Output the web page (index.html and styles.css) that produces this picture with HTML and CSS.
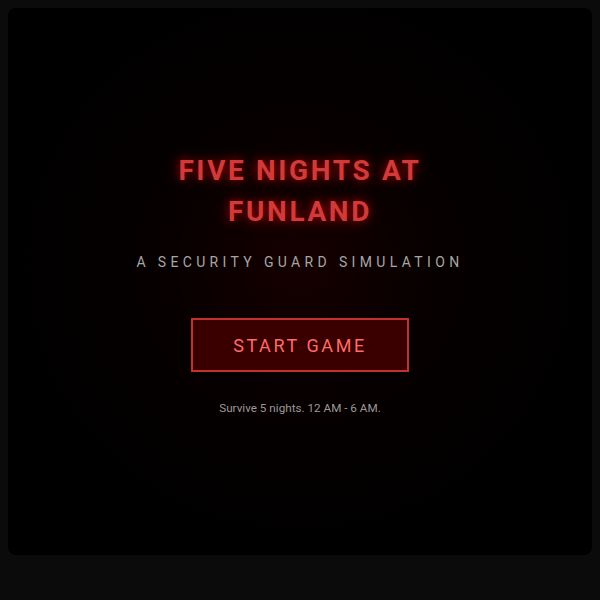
FILE: index.html
```html
<!DOCTYPE html>
<html lang="en">
<head>
    <meta charset="UTF-8">
    <meta name="viewport" content="width=device-width, initial-scale=1.0">
    <title>Five Nights at Funland</title>
    <link rel="stylesheet" href="styles.css">
</head>
<body>
    <div class="screen">
        <div class="menu">
            <h1 class="title">FIVE NIGHTS AT<br>FUNLAND</h1>
            <div class="subtitle">A SECURITY GUARD SIMULATION</div>
            <button class="start-btn">START GAME</button>
            <div class="hint">Survive 5 nights. 12 AM - 6 AM.</div>
        </div>
    </div>
</body>
</html>
```

FILE: styles.css
```css
* {
    margin: 0;
    padding: 0;
    box-sizing: border-box;
}

body {
    background: #0b0b0b;
    margin: 8px;
    font-family: Roboto, 'Liberation Sans', Arial, sans-serif;
}

.screen {
    height: 547px;
    border-radius: 8px;
    background:
        radial-gradient(ellipse 300px 290px at 50% 47%, rgba(40, 0, 0, 0.55) 0%, rgba(20, 0, 0, 0.35) 45%, rgba(0, 0, 0, 0) 100%),
        #000;
    display: flex;
    align-items: center;
    justify-content: center;
}

.menu {
    display: flex;
    flex-direction: column;
    align-items: center;
    text-align: center;
    margin-top: 2px;
}

.title {
    font-size: 28px;
    font-weight: 700;
    line-height: 41px;
    letter-spacing: 2.6px;
    color: #d23a3a;
    text-shadow: 0 0 10px rgba(255, 0, 0, 0.6), 0 0 20px rgba(200, 0, 0, 0.35);
    margin-bottom: 22px;
}

.subtitle {
    font-size: 14px;
    letter-spacing: 4.35px;
    color: #a6a6a6;
    margin-bottom: 48px;
}

.start-btn {
    width: 218px;
    height: 54px;
    background: #3a0000;
    border: 2px solid #c23030;
    color: #ff6a6a;
    font-family: inherit;
    font-size: 18px;
    letter-spacing: 2.6px;
    cursor: pointer;
    margin-bottom: 29px;
}

.hint {
    font-size: 11.7px;
    color: #9a9a9a;
}
```
